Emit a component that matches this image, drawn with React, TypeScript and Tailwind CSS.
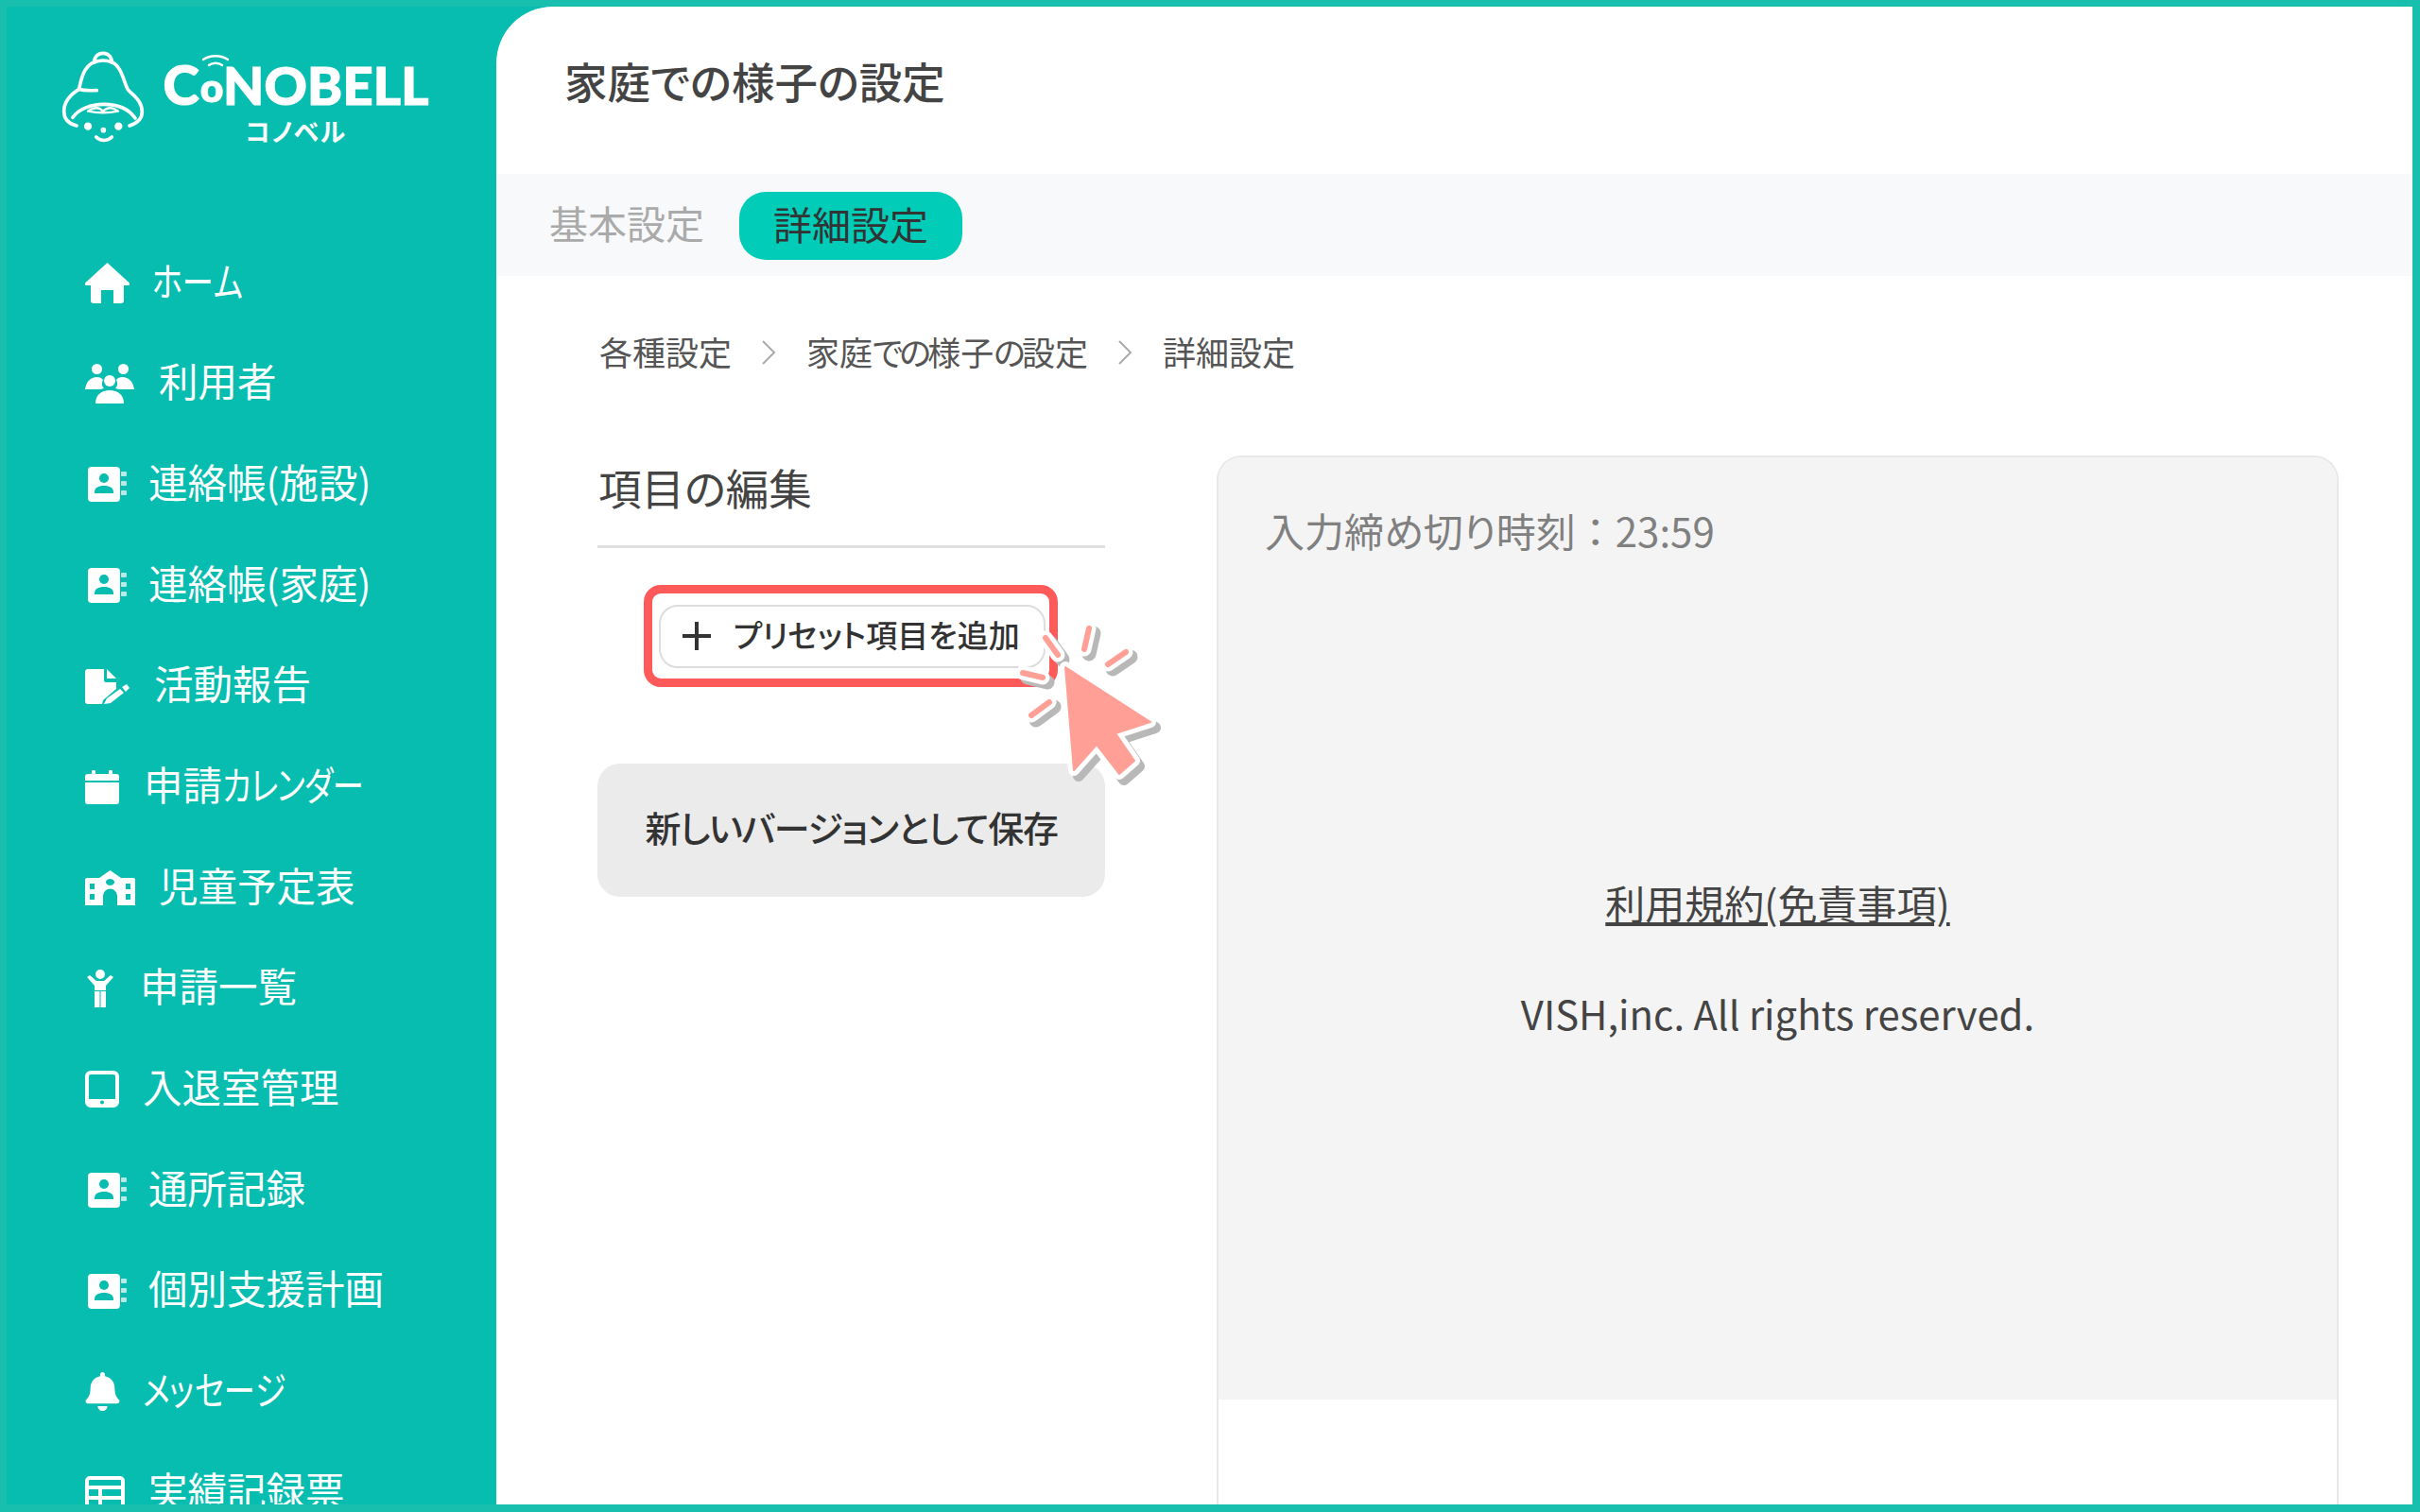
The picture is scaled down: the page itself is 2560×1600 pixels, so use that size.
import React from "react";
import { FaBell } from "react-icons/fa";

const jp = "font-['Noto_Sans_CJK_JP','Noto_Sans',sans-serif] [font-feature-settings:'palt']";

function Home() {
  return (
    <svg viewBox="0 0 47 43" className="w-[47px] h-[43px]" fill="#fff">
      <path d="M23.500 0L47 21.500a1.500 1.500 0 0 1-1 2.500H41v16a3 3 0 0 1-3 3H30V29H17v14H9a3 3 0 0 1-3-3V24H1a1.500 1.500 0 0 1-1-2.500z" />
    </svg>
  );
}
function People() {
  return (
    <svg viewBox="0 0 52 42" className="w-[52px] h-[42px]" fill="#fff">
      <circle cx="12.500" cy="5.500" r="5.500" />
      <circle cx="40.500" cy="5.500" r="5.500" />
      <circle cx="26" cy="18" r="6" />
      <path d="M0 27c1-8 6-13 12.500-13 3 0 5 1 6.500 3-2 4-1 7 1 9-2 .5-4 1-6 1z" />
      <path d="M52 27c-1-8-6-13-12.500-13-3 0-5 1-6.500 3 2 4 1 7-1 9 2 .5 4 1 6 1z" />
      <path d="M11 42c0-9 6-14 15-14s15 5 15 14z" />
    </svg>
  );
}
function FileSign() {
  return (
    <svg viewBox="0 0 47 37" className="w-[47px] h-[37px]" fill="#fff">
      <path d="M3 0h17v12a2 2 0 0 0 2 2h11v7L19 33l-1 4H3a3 3 0 0 1-3-3V3a3 3 0 0 1 3-3z" />
      <path d="M23 0l10 10H23z" />
      <path d="M39 19l5-3 3 4-4 4zM37 21l4 4-14 11-7 1 3-6z" />
    </svg>
  );
}
function School() {
  return (
    <svg viewBox="0 0 53 37" className="w-[53px] h-[37px]">
      <path fill="#fff" fillRule="evenodd" d="M2 8h13L26.500 0 38 8h13a2 2 0 0 1 2 2v27H34V27a7 7 0 0 0-15 0v10H0V10a2 2 0 0 1 2-2zM26.500 9a4.500 3.500 0 1 0 .01 0zM5 14v6h5v-6zM5 25v6h5v-6zM43 14v6h5v-6zM43 25v6h5v-6z" />
    </svg>
  );
}
function Book() {
  return (
    <svg viewBox="0 0 41 37" className="w-[41px] h-[37px]" fill="#fff">
      <rect x="0" y="0" width="34" height="37" rx="4" />
      <circle cx="17" cy="12" r="5" fill="#06bdb0" />
      <path d="M7 27c0-5 4-7 10-7s10 2 10 7v1H7z" fill="#06bdb0" />
      <rect x="35" y="5" width="6" height="5" rx="1" opacity=".7" />
      <rect x="35" y="15" width="6" height="5" rx="1" opacity=".7" />
      <rect x="35" y="25" width="6" height="5" rx="1" opacity=".7" />
    </svg>
  );
}
function Calendar() {
  return (
    <svg viewBox="0 0 36 36" className="w-[36px] h-[36px]" fill="#fff">
      <rect x="7" y="0" width="4" height="7" rx="1" />
      <rect x="25" y="0" width="4" height="7" rx="1" />
      <path d="M0 7a3 3 0 0 1 3-3h30a3 3 0 0 1 3 3v4H0z" />
      <path d="M0 13h36v20a3 3 0 0 1-3 3H3a3 3 0 0 1-3-3z" />
    </svg>
  );
}
function Child() {
  return (
    <svg viewBox="0 0 32 40" className="w-[32px] h-[40px]" fill="#fff">
      <circle cx="16" cy="5" r="5" />
      <path d="M2 8l3-2 7 6h8l7-6 3 2-8 9v5H10v-5z" />
      <path d="M10 23h5.500v17H10zM16.500 23H22v17h-5.500z" />
    </svg>
  );
}
function Tablet() {
  return (
    <svg viewBox="0 0 36 39" className="w-[36px] h-[39px]" fill="none">
      <rect x="2" y="2" width="32" height="35" rx="4" stroke="#fff" strokeWidth="4" />
      <rect x="2" y="30" width="32" height="7" fill="#fff" />
      <circle cx="18" cy="33.500" r="2" fill="#06bdb0" />
    </svg>
  );
}
function TableIcon() {
  return (
    <svg viewBox="0 0 42 36" className="w-[42px] h-[36px]" fill="none" stroke="#fff" strokeWidth="4">
      <rect x="2" y="2" width="38" height="32" rx="3" />
      <path d="M2 12h38M2 23h38M16 12v22" />
    </svg>
  );
}

/* Condensed katakana, as the reference's kana are narrower than Noto's. */
function Label({ text }: { text: string }) {
  return (
    <>
      {Array.from(text).map((ch, i) =>
        /[\u30a0-\u30ff]/.test(ch) ? (
          <span
            key={i}
            className={
              /[ッャュョ]/.test(ch)
                ? "inline-block origin-left scale-x-[0.8] mr-[-0.13em]"
                : "inline-block origin-left scale-x-[0.8] mr-[-0.2em]"
            }
          >
            {ch}
          </span>
        ) : (
          <span key={i}>{ch}</span>
        )
      )}
    </>
  );
}

const items: { label: string; slot: string; icon: React.ReactNode }[] = [
  { label: "ホーム", slot: "w-[71px]", icon: <Home /> },
  { label: "利用者", slot: "w-[78px]", icon: <People /> },
  { label: "連絡帳(施設)", slot: "w-[67px]", icon: <div className="pl-[3px]"><Book /></div> },
  { label: "連絡帳(家庭)", slot: "w-[67px]", icon: <div className="pl-[3px]"><Book /></div> },
  { label: "活動報告", slot: "w-[73px]", icon: <FileSign /> },
  { label: "申請カレンダー", slot: "w-[62px]", icon: <Calendar /> },
  { label: "児童予定表", slot: "w-[78px]", icon: <School /> },
  { label: "申請一覧", slot: "w-[58px]", icon: <Child /> },
  { label: "入退室管理", slot: "w-[61px]", icon: <Tablet /> },
  { label: "通所記録", slot: "w-[67px]", icon: <div className="pl-[3px]"><Book /></div> },
  { label: "個別支援計画", slot: "w-[67px]", icon: <div className="pl-[3px]"><Book /></div> },
  { label: "メッセージ", slot: "w-[61px]", icon: <FaBell className="w-[37px] h-[41px] text-white" /> },
  { label: "実績記録票", slot: "w-[67px]", icon: <TableIcon /> },
];

function Logo() {
  return (
    <div className="h-[239px] pt-[45px] pl-[56px] flex items-start">
      <svg viewBox="70 65 300 315" className="w-[100px] h-[105px] shrink-0" fill="none" stroke="#fff" strokeWidth="11" strokeLinecap="round" strokeLinejoin="round">
        <path d="M180 108c0-18 12-30 28-30s28 12 28 30" />
        <path d="M188 196c-22 0-40 2-56-4 6-30 14-72 48-86 18-6 40-6 56 0 30 14 36 56 50 86 14 18 46 34 46 72 0 22-14 36-40 44" />
        <path d="M132 192c-26 16-48 38-48 70 0 26 16 40 40 46" />
        <path d="M112 282c18-28 60-42 98-42s78 12 100 44" />
        <path d="M160 262c20-14 36-14 48 0 14-14 30-14 48 0-30 6-66 6-96 0z" strokeWidth="7" />
        <path d="M186 344c14 14 36 14 50 0" />
        <circle cx="160" cy="310" r="7" fill="#fff" />
        <circle cx="257" cy="310" r="7" fill="#fff" />
        <circle cx="209" cy="322" r="3" fill="#fff" />
      </svg>
      <div className="ml-[5px] flex flex-col items-center w-[290px]">
        <div className="relative flex items-end h-[66px] font-['Lato',sans-serif] font-black text-white leading-none [-webkit-text-stroke:1.2px_white]">
          <span className="text-[58px]">C</span>
          <span className="text-[42px] ml-[1px] leading-[52px]">o</span>
          <span className="text-[56px] tracking-[0.2px]">NOBELL</span>
          <svg viewBox="0 0 30 14" className="absolute left-[41px] top-[6px] w-[30px] h-[14px]" fill="none" stroke="#fff" strokeWidth="2.500" strokeLinecap="round">
            <path d="M2 5c7-5 19-5 26 0" />
            <path d="M8 11c4-3 10-3 14 0" />
          </svg>
        </div>
        <div className="text-white font-bold text-[27px] leading-[28px] mt-[7px] tracking-[1.500px]">コノベル</div>
      </div>
    </div>
  );
}

function Cursor() {
  const ticks = [
    [1106, 675, 1119, 693],
    [1152, 665, 1147, 687],
    [1191, 690, 1172, 703],
    [1082, 712, 1103, 717],
    [1110, 743, 1091, 757],
  ];
  const arrow = "M1127 706L1217 764L1180 776L1200 805L1184 819L1160 788L1136 815Z";
  return (
    <svg viewBox="1060 650 200 200" className="absolute left-[1060px] top-[650px] w-[200px] h-[200px]" fill="none" strokeLinecap="round" strokeLinejoin="round">
      {ticks.map((t, i) => (
        <line key={`s${i}`} x1={t[0] + 5} y1={t[1] + 5} x2={t[2] + 5} y2={t[3] + 5} stroke="#b8b8b8" strokeWidth="15" />
      ))}
      {ticks.map((t, i) => (
        <line key={`w${i}`} x1={t[0]} y1={t[1]} x2={t[2]} y2={t[3]} stroke="#fff" strokeWidth="15" />
      ))}
      {ticks.map((t, i) => (
        <line key={`p${i}`} x1={t[0]} y1={t[1]} x2={t[2]} y2={t[3]} stroke="#ff9f95" strokeWidth="6" />
      ))}
      <path d={arrow} transform="translate(5 6)" stroke="#b8b8b8" strokeWidth="12" fill="#b8b8b8" />
      <path d={arrow} stroke="#fff" strokeWidth="12" fill="#fff" />
      <path d={arrow} stroke="#ff9f95" strokeWidth="2" fill="#ff9f95" />
    </svg>
  );
}

function Chevron() {
  return (
    <svg viewBox="0 0 16 26" className="w-[16px] h-[26px]" fill="none" stroke="#aaa" strokeWidth="2">
      <path d="M2 1l12 12L2 25" />
    </svg>
  );
}

export default function App() {
  return (
    <div className={`${jp} relative w-[2560px] h-[1600px] overflow-hidden bg-[#19bfae] pl-[7px] pt-[7px] pr-[8px] pb-[8px]`}>
      <div className="flex h-full bg-[#06bdb0]">
        <aside className="w-[518px] shrink-0 overflow-hidden">
          <Logo />
          <nav className="flex flex-col">
            {items.map((it) => (
              <div key={it.label} className="h-[106.7px] shrink-0 flex items-center pl-[83px]">
                <div className={`${it.slot} shrink-0 flex items-center`}>{it.icon}</div>
                <span className="text-white text-[41.5px] leading-none whitespace-nowrap pb-[6px]"><Label text={it.label} /></span>
              </div>
            ))}
          </nav>
        </aside>
        <main className="flex-1 min-w-0 bg-white rounded-tl-[60px] overflow-hidden flex flex-col">
          <header className="h-[177px] shrink-0 flex items-center pl-[72px] pb-[20px] text-[45.5px] font-medium text-[#444]">家庭での様子の設定</header>
          <div className="h-[108px] shrink-0 bg-[#f8f9fb] flex items-center pl-[56px] pt-[2px]">
            <span className="text-[41px] text-[#aaa] w-[201px] pb-[6px]">基本設定</span>
            <span className="h-[72px] w-[236px] rounded-[28px] bg-[#00ccb8] flex items-center justify-center text-[41px] text-[#333] pb-[4px]">詳細設定</span>
          </div>
          <div className="flex-1 min-h-0 pl-[107px] pr-[78px] pt-[56px] flex flex-col">
            <div className="h-[52px] shrink-0 flex items-center pl-[2px] pb-[3px] text-[35px] text-[#555]">
              <span>各種設定</span>
              <span className="ml-[31px] mr-[32px]"><Chevron /></span>
              <span>家庭<span className="tracking-[-4px]">で</span><span className="tracking-[-4px]">の</span>様子<span className="tracking-[-4px]">の</span>設定</span>
              <span className="ml-[31px] mr-[32px]"><Chevron /></span>
              <span>詳細設定</span>
            </div>
            <div className="mt-[82px] flex-1 min-h-0 flex justify-between">
              <div className="w-[537px] shrink-0">
                <div className="pb-[29px] border-b-[3px] border-[#e0e0e0] pl-[1px] text-[45.5px] leading-[66px] text-[#444]">項目の編集</div>
                <div className="mt-[39px] ml-[49px] w-[438px] h-[108px] border-[9px] border-[#ff5a5a] rounded-[18px] flex items-center pl-[7px]">
                  <div className="w-[409px] h-[67px] rounded-[20px] border-2 border-[#ddd] flex items-center pl-[23px] bg-white">
                    <svg viewBox="0 0 30 30" className="w-[30px] h-[30px] shrink-0" stroke="#333" strokeWidth="4">
                      <path d="M15 0v30M0 15h30" />
                    </svg>
                    <span className="ml-[24px] text-[33px] font-medium text-[#333] whitespace-nowrap pb-[2px]">プリセット項目を追加</span>
                  </div>
                </div>
                <div className="mt-[81px] h-[141px] rounded-[24px] bg-[#ebebeb] flex items-center justify-center text-[38px] font-medium tracking-[-1.3px] text-[#333] pb-[8px]">新しいバージョンとして保存</div>
              </div>
              <div className="w-[1187px] shrink-0 h-full border-2 border-b-0 border-[#e8e8e8] rounded-t-[26px] overflow-hidden bg-white">
                <div className="h-[997px] bg-[#f4f4f4] pt-[47px] flex flex-col">
                  <div className="pl-[49px] text-[42px] leading-[60px] text-[#808080]">入力締め切り時刻<span className="[font-feature-settings:normal]">：</span>23:59</div>
                  <a className="mt-[334px] self-center text-[42px] leading-[60px] text-[#444] underline">利用規約(免責事項)</a>
                  <div className="mt-[57px] self-center text-[41.8px] leading-[60px] text-[#444]">VISH,inc. All rights reserved.</div>
                </div>
              </div>
            </div>
          </div>
        </main>
      </div>
      <Cursor />
    </div>
  );
}
